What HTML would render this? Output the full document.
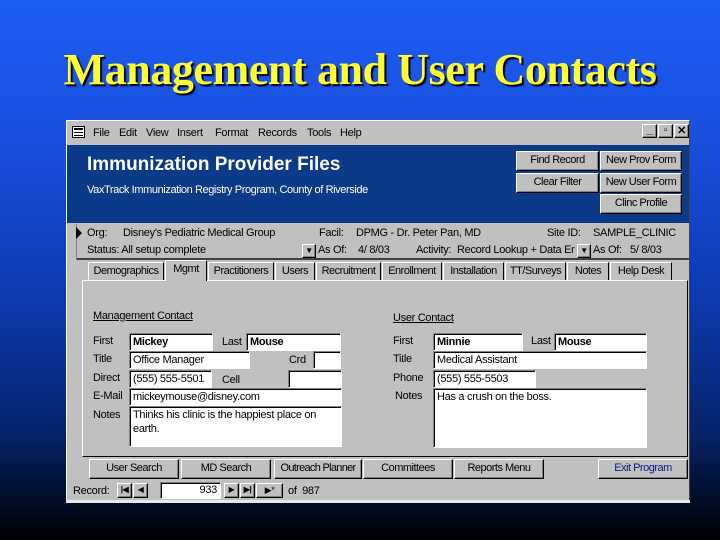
<!DOCTYPE html>
<html><head><style>
*{margin:0;padding:0;box-sizing:border-box}
body{width:720px;height:540px;overflow:hidden;position:relative;background:linear-gradient(#1c5cf2 0%,#1a50e0 25%,#0d3ab0 55%,#06236a 80%,#000 100%);font-family:"Liberation Sans",sans-serif;font-size:11px;color:#000;letter-spacing:-0.3px}
.a{position:absolute;white-space:nowrap}
h1{position:absolute;left:0;width:720px;top:44px;text-align:center;font:bold 44px "Liberation Serif",serif;color:#ffff33;text-shadow:2px 2px 1px #000;letter-spacing:-0.4px}
.win{position:absolute;left:66px;top:120px;width:624px;height:383px;background:#c0c0c0;border:1px solid #fff;border-right-color:#444;border-bottom-color:#fff}
.btn{position:absolute;background:#c0c0c0;border:1px solid;border-color:#fff #000 #000 #fff;box-shadow:inset -1px -1px #808080;text-align:center;line-height:17px;font-size:11px;white-space:nowrap;overflow:hidden;letter-spacing:-0.5px}
.in{position:absolute;background:#fff;border:1px solid;border-color:#808080 #fff #fff #808080;box-shadow:inset 1px 1px #000;padding:1px 3px;font-size:11px;line-height:14px;white-space:nowrap;overflow:hidden}
.tab{position:absolute;top:262px;height:19px;border:1px solid;border-color:#fff #000 transparent #fff;text-align:center;line-height:17px;background:#c0c0c0;white-space:nowrap;overflow:hidden;letter-spacing:-0.5px}
.w{color:#fff}
</style></head><body>
<h1>Management and User Contacts</h1>
<div class="win"></div>
<div class="a" style="left:72px;top:126px;width:13px;height:12px;border:1px solid #000;background:#fff"></div>
<div class="a" style="left:74px;top:128px;width:9px;height:2px;background:#000"></div>
<div class="a" style="left:74px;top:132px;width:9px;height:1px;background:#000"></div>
<div class="a" style="left:74px;top:135px;width:9px;height:1px;background:#000"></div>
<div class="a" style="left:93px;top:127px">File</div>
<div class="a" style="left:119px;top:127px">Edit</div>
<div class="a" style="left:146px;top:127px">View</div>
<div class="a" style="left:177px;top:127px">Insert</div>
<div class="a" style="left:215px;top:127px">Format</div>
<div class="a" style="left:258px;top:127px">Records</div>
<div class="a" style="left:307px;top:127px">Tools</div>
<div class="a" style="left:340px;top:127px">Help</div>
<div class="btn" style="left:642px;top:124px;width:15px;height:14px;line-height:10px;font-weight:bold">_</div>
<div class="btn" style="left:658px;top:124px;width:15px;height:14px;line-height:12px;font-size:10px;font-weight:bold">▫</div>
<div class="btn" style="left:674px;top:124px;width:15px;height:14px;line-height:12px;font-weight:bold">✕</div>
<div class="a" style="left:67px;top:145px;width:622px;height:78px;background:#0a3a88"></div>
<div class="a w" style="left:87px;top:154px;font-size:19px;font-weight:bold;letter-spacing:0">Immunization Provider Files</div>
<div class="a w" style="left:87px;top:184px;font-size:11px;letter-spacing:-0.4px">VaxTrack Immunization Registry Program, County of Riverside</div>
<div class="btn" style="left:516px;top:151px;width:83px;height:20px">Find Record</div>
<div class="btn" style="left:600px;top:151px;width:82px;height:20px">New Prov Form</div>
<div class="btn" style="left:516px;top:173px;width:83px;height:20px">Clear Filter</div>
<div class="btn" style="left:600px;top:173px;width:82px;height:20px">New User Form</div>
<div class="btn" style="left:600px;top:194px;width:82px;height:20px">Clinc Profile</div>
<div class="a" style="left:67px;top:224px;width:10px;height:36px;background:#c0c0c0;border-right:1px solid #808080"></div>
<div class="a" style="left:76px;top:227px;width:0;height:0;border-left:6px solid #000;border-top:6px solid transparent;border-bottom:6px solid transparent"></div>
<div class="a" style="left:87px;top:227px">Org:</div>
<div class="a" style="left:123px;top:227px">Disney's Pediatric Medical Group</div>
<div class="a" style="left:319px;top:227px">Facil:</div>
<div class="a" style="left:356px;top:227px">DPMG - Dr. Peter Pan, MD</div>
<div class="a" style="left:547px;top:227px">Site ID:</div>
<div class="a" style="left:593px;top:227px">SAMPLE_CLINIC</div>
<div class="a" style="left:87px;top:244px">Status: All setup complete</div>
<div class="btn" style="left:302px;top:244px;width:14px;height:14px;line-height:11px;font-size:8px">▼</div>
<div class="a" style="left:318px;top:244px">As Of:</div>
<div class="a" style="left:358px;top:244px">4/ 8/03</div>
<div class="a" style="left:416px;top:244px">Activity:</div>
<div class="a" style="left:457px;top:244px;width:118px;overflow:hidden">Record Lookup + Data Entry</div>
<div class="btn" style="left:577px;top:244px;width:14px;height:14px;line-height:11px;font-size:8px">▼</div>
<div class="a" style="left:593px;top:244px">As Of:</div>
<div class="a" style="left:630px;top:244px">5/ 8/03</div>
<div class="a" style="left:77px;top:258px;width:612px;height:2px;background:#404040"></div>
<div class="tab" style="left:88px;width:76px">Demographics</div>
<div class="tab" style="left:165px;top:260px;height:21px;width:42px;z-index:2;border-bottom:none;line-height:16px">Mgmt</div>
<div class="tab" style="left:208px;width:66px">Practitioners</div>
<div class="tab" style="left:275px;width:40px">Users</div>
<div class="tab" style="left:316px;width:65px">Recruitment</div>
<div class="tab" style="left:382px;width:60px">Enrollment</div>
<div class="tab" style="left:443px;width:61px">Installation</div>
<div class="tab" style="left:505px;width:61px">TT/Surveys</div>
<div class="tab" style="left:567px;width:42px">Notes</div>
<div class="tab" style="left:610px;width:62px">Help Desk</div>
<div class="a" style="left:82px;top:280px;width:606px;height:177px;border-left:1px solid #fff;border-top:1px solid #fff;border-right:1px solid #000;border-bottom:1px solid #000"></div>
<div class="a" style="left:93px;top:310px;text-decoration:underline">Management Contact</div>
<div class="a" style="left:93px;top:335px">First</div>
<div class="in" style="left:129px;top:333px;width:84px;height:18px;font-weight:bold">Mickey</div>
<div class="a" style="left:222px;top:336px">Last</div>
<div class="in" style="left:246px;top:333px;width:95px;height:18px;font-weight:bold">Mouse</div>
<div class="a" style="left:93px;top:353px">Title</div>
<div class="in" style="left:129px;top:351px;width:121px;height:18px">Office Manager</div>
<div class="a" style="left:289px;top:354px">Crd</div>
<div class="in" style="left:313px;top:351px;width:28px;height:18px"></div>
<div class="a" style="left:93px;top:372px">Direct</div>
<div class="in" style="left:129px;top:370px;width:83px;height:18px">(555) 555-5501</div>
<div class="a" style="left:222px;top:374px">Cell</div>
<div class="in" style="left:288px;top:370px;width:54px;height:18px"></div>
<div class="a" style="left:93px;top:390px">E-Mail</div>
<div class="in" style="left:129px;top:388px;width:213px;height:18px">mickeymouse@disney.com</div>
<div class="a" style="left:93px;top:409px">Notes</div>
<div class="in" style="left:129px;top:406px;width:213px;height:41px;white-space:normal">Thinks his clinic is the happiest place on earth.</div>
<div class="a" style="left:393px;top:312px;text-decoration:underline">User Contact</div>
<div class="a" style="left:393px;top:335px">First</div>
<div class="in" style="left:433px;top:333px;width:90px;height:18px;font-weight:bold">Minnie</div>
<div class="a" style="left:531px;top:335px">Last</div>
<div class="in" style="left:554px;top:333px;width:93px;height:18px;font-weight:bold">Mouse</div>
<div class="a" style="left:393px;top:353px">Title</div>
<div class="in" style="left:433px;top:351px;width:214px;height:18px">Medical Assistant</div>
<div class="a" style="left:393px;top:372px">Phone</div>
<div class="in" style="left:433px;top:370px;width:103px;height:18px">(555) 555-5503</div>
<div class="a" style="left:395px;top:390px">Notes</div>
<div class="in" style="left:433px;top:388px;width:214px;height:60px">Has a crush on the boss.</div>
<div class="btn" style="left:89px;top:459px;width:90px;height:20px">User Search</div>
<div class="btn" style="left:181px;top:459px;width:90px;height:20px">MD Search</div>
<div class="btn" style="left:274px;top:459px;width:88px;height:20px;letter-spacing:-0.7px">Outreach Planner</div>
<div class="btn" style="left:363px;top:459px;width:90px;height:20px">Committees</div>
<div class="btn" style="left:454px;top:459px;width:90px;height:20px">Reports Menu</div>
<div class="btn" style="left:598px;top:459px;width:90px;height:20px;color:#0a1a80">Exit Program</div>
<div class="a" style="left:73px;top:485px">Record:</div>
<div class="btn" style="left:117px;top:483px;width:15px;height:15px;line-height:12px;font-size:8px;font-weight:bold">|◀</div>
<div class="btn" style="left:133px;top:483px;width:15px;height:15px;line-height:12px;font-size:8px">◀</div>
<div class="in" style="left:160px;top:482px;width:61px;height:17px;text-align:right;line-height:13px">933</div>
<div class="btn" style="left:224px;top:483px;width:15px;height:15px;line-height:12px;font-size:8px">▶</div>
<div class="btn" style="left:240px;top:483px;width:15px;height:15px;line-height:12px;font-size:8px;font-weight:bold">▶|</div>
<div class="btn" style="left:256px;top:483px;width:27px;height:15px;line-height:12px;font-size:9px">▶*</div>
<div class="a" style="left:288px;top:485px">of&nbsp; 987</div>
<div class="a" style="left:66px;top:500px;width:624px;height:3px;background:#e8e8e8"></div>
</body></html>
